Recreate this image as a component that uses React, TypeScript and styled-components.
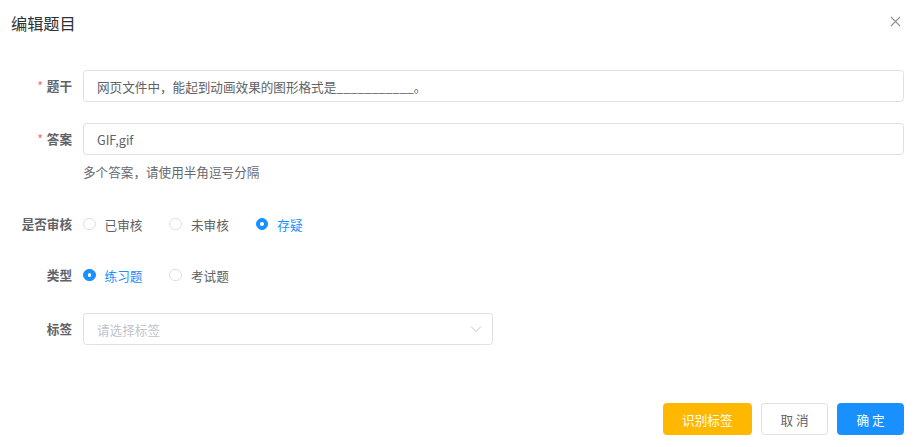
import React, { useState } from 'react';
import styled, { createGlobalStyle } from 'styled-components';

const GlobalStyle = createGlobalStyle`
  html, body {
    margin: 0;
    padding: 0;
    background: #ffffff;
  }
  * {
    box-sizing: border-box;
  }
  body {
    font-family: "Noto Sans CJK SC", "Noto Sans", "Liberation Sans", sans-serif;
    -webkit-font-smoothing: antialiased;
  }
`;

const Dialog = styled.div`
  width: 915px;
  height: 447px;
  background: #fff;
  display: flex;
  flex-direction: column;
`;

const Header = styled.div`
  display: flex;
  justify-content: space-between;
  align-items: center;
  padding: 14px 14px 0 11px;
  height: 32px;
`;

const Title = styled.span`
  font-size: 16.2px;
  line-height: 18px;
  color: #303133;
`;

const CloseButton = styled.button`
  border: none;
  background: none;
  padding: 0;
  width: 12px;
  height: 12px;
  display: flex;
  align-items: center;
  justify-content: center;
  cursor: pointer;
  margin-top: -4px;
`;

const Body = styled.div`
  padding: 38px 11px 0 0;
`;

const FormItem = styled.div<{ $gap: number }>`
  display: flex;
  margin-bottom: ${(p) => p.$gap}px;
`;

const Label = styled.label`
  width: 83px;
  flex-shrink: 0;
  padding-right: 11px;
  text-align: right;
  font-size: 12.6px;
  line-height: 32px;
  font-weight: 700;
  color: #606266;
`;

const Required = styled.span`
  color: #f56c6c;
  margin-right: 3.6px;
  font-weight: 400;
`;

const Content = styled.div`
  flex: 1;
  min-width: 0;
`;

const Input = styled.input`
  display: block;
  width: 100%;
  height: 32px;
  border: 1px solid #dcdfe6;
  border-radius: 3.6px;
  padding: 0 13px;
  font-size: 12.6px;
  font-family: inherit;
  color: #606266;
  outline: none;
  background: #fff;
`;

const Hint = styled.div`
  margin-top: 7px;
  font-size: 12.6px;
  line-height: 19px;
  color: #666a70;
`;

const RadioGroup = styled.div`
  display: flex;
  align-items: center;
  height: 32px;
`;

const RadioLabel = styled.label<{ $checked: boolean }>`
  display: inline-flex;
  align-items: center;
  margin-right: 27px;
  cursor: pointer;
  font-size: 12.6px;
  color: ${(p) => (p.$checked ? '#1890ff' : '#606266')};
`;

const RadioCircle = styled.span<{ $checked: boolean }>`
  width: 12.6px;
  height: 12.6px;
  border-radius: 50%;
  border: 1px solid ${(p) => (p.$checked ? '#1890ff' : '#dcdfe6')};
  background: ${(p) => (p.$checked ? '#1890ff' : '#fff')};
  margin-right: 9px;
  display: inline-flex;
  align-items: center;
  justify-content: center;

  &::after {
    content: '';
    width: 3.6px;
    height: 3.6px;
    border-radius: 50%;
    background: #fff;
    display: ${(p) => (p.$checked ? 'block' : 'none')};
  }
`;

const Select = styled.div`
  width: 410px;
  height: 32px;
  border: 1px solid #dcdfe6;
  border-radius: 3.6px;
  padding: 0 10px 0 13px;
  display: flex;
  align-items: center;
  justify-content: space-between;
  cursor: pointer;
`;

const Placeholder = styled.span`
  font-size: 12.6px;
  color: #c0c4cc;
`;

const Footer = styled.div`
  margin-top: auto;
  display: flex;
  justify-content: flex-end;
  padding: 0 11px 12px;
`;

const Button = styled.button<{ $variant: 'warning' | 'default' | 'primary' }>`
  height: 32px;
  padding: 0 18.5px;
  margin-left: 9px;
  border-radius: 3.6px;
  font-size: 12.6px;
  font-family: inherit;
  cursor: pointer;
  white-space: pre;
  border: 1px solid
    ${(p) => (p.$variant === 'warning' ? '#ffb800' : p.$variant === 'primary' ? '#1890ff' : '#dcdfe6')};
  background: ${(p) => (p.$variant === 'warning' ? '#ffb800' : p.$variant === 'primary' ? '#1890ff' : '#fff')};
  color: ${(p) => (p.$variant === 'default' ? '#606266' : '#fff')};
`;

const Radio = ({ label, checked, onClick }: { label: string; checked: boolean; onClick: () => void }) => (
  <RadioLabel $checked={checked} onClick={onClick}>
    <RadioCircle $checked={checked} />
    {label}
  </RadioLabel>
);

const App = () => {
  const [stem, setStem] = useState('网页文件中，能起到动画效果的图形格式是___________。');
  const [answer, setAnswer] = useState('GIF,gif');
  const [audit, setAudit] = useState('存疑');
  const [kind, setKind] = useState('练习题');

  return (
    <>
      <GlobalStyle />
      <Dialog>
        <Header>
          <Title>编辑题目</Title>
          <CloseButton aria-label="close">
            <svg width="11" height="11" viewBox="0 0 11 11">
              <path d="M1 1L10 10M10 1L1 10" stroke="#909399" strokeWidth="1.1" />
            </svg>
          </CloseButton>
        </Header>
        <Body>
          <FormItem $gap={21}>
            <Label>
              <Required>*</Required>题干
            </Label>
            <Content>
              <Input value={stem} onChange={(e) => setStem(e.target.value)} />
            </Content>
          </FormItem>
          <FormItem $gap={27}>
            <Label>
              <Required>*</Required>答案
            </Label>
            <Content>
              <Input value={answer} onChange={(e) => setAnswer(e.target.value)} />
              <Hint>多个答案，请使用半角逗号分隔</Hint>
            </Content>
          </FormItem>
          <FormItem $gap={19}>
            <Label>是否审核</Label>
            <Content>
              <RadioGroup>
                {['已审核', '未审核', '存疑'].map((o) => (
                  <Radio key={o} label={o} checked={audit === o} onClick={() => setAudit(o)} />
                ))}
              </RadioGroup>
            </Content>
          </FormItem>
          <FormItem $gap={22}>
            <Label>类型</Label>
            <Content>
              <RadioGroup>
                {['练习题', '考试题'].map((o) => (
                  <Radio key={o} label={o} checked={kind === o} onClick={() => setKind(o)} />
                ))}
              </RadioGroup>
            </Content>
          </FormItem>
          <FormItem $gap={0}>
            <Label>标签</Label>
            <Content>
              <Select>
                <Placeholder>请选择标签</Placeholder>
                <svg width="12" height="8" viewBox="0 0 12 8">
                  <path d="M1 1.5L6 6.5L11 1.5" fill="none" stroke="#c0c4cc" strokeWidth="1" />
                </svg>
              </Select>
            </Content>
          </FormItem>
        </Body>
        <Footer>
          <Button $variant="warning">识别标签</Button>
          <Button $variant="default">取 消</Button>
          <Button $variant="primary">确 定</Button>
        </Footer>
      </Dialog>
    </>
  );
};

export default App;
